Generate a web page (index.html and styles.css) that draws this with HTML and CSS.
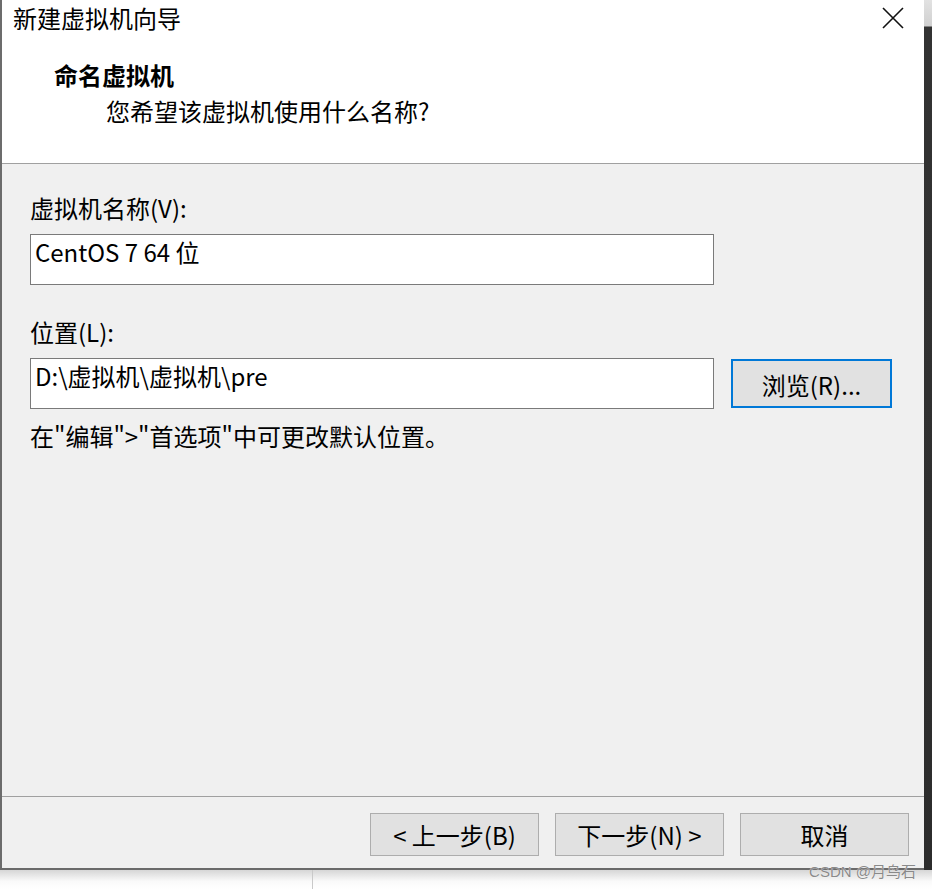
FILE: index.html
```html
<!DOCTYPE html>
<html lang="zh-CN">
<head>
<meta charset="utf-8">
<title>新建虚拟机向导</title>
<link rel="stylesheet" href="styles.css">
</head>
<body>
<div class="screen">
  <div class="top">
    <div class="dialog">
      <div class="header">
        <div class="titlebar">
          <span class="title">新建虚拟机向导</span>
          <span class="close" aria-label="关闭">
            <svg width="22" height="22" viewBox="0 0 22 22"><path d="M1 1 L21 21 M21 1 L1 21" stroke="#111" stroke-width="1.6" fill="none"/></svg>
          </span>
        </div>
        <div class="heading">命名虚拟机</div>
        <div class="subheading">您希望该虚拟机使用什么名称?</div>
      </div>
      <div class="body">
        <div class="label label-first">虚拟机名称(V):</div>
        <div class="field">CentOS 7 64 位</div>
        <div class="label label-second">位置(L):</div>
        <div class="row">
          <div class="field">D:\虚拟机\虚拟机\pre</div>
          <div class="browse">浏览(R)...</div>
        </div>
        <div class="hint">在"编辑"&gt;"首选项"中可更改默认位置。</div>
      </div>
      <div class="footer">
        <div class="btn">&lt; 上一步(B)</div>
        <div class="btn">下一步(N) &gt;</div>
        <div class="btn">取消</div>
      </div>
    </div>
    <div class="side"></div>
  </div>
  <div class="below">
    <div class="below-left"></div>
    <div class="below-right"></div>
  </div>
  <div class="watermark">CSDN @月鸟石</div>
</div>
</body>
</html>
```
FILE: styles.css
```css
html, body {
  margin: 0;
  padding: 0;
  background: #ffffff;
}
body {
  font-family: "Noto Sans CJK SC", "Noto Sans", sans-serif;
  color: #000;
}
.screen {
  position: relative;
  width: 932px;
  height: 889px;
  overflow: hidden;
  display: flex;
  flex-direction: column;
}
.top {
  display: flex;
  height: 870px;
}
.dialog {
  width: 922px;
  height: 868px;
  border-left: 2px solid #6c6c6c;
  border-bottom: 2px solid #6a6a6a;
  display: flex;
  flex-direction: column;
  background: #f0f0f0;
}
.side {
  width: 8px;
  background: linear-gradient(#e2e2e2 0, #d0d0d0 26px, #333333 27px, #2c2c2c 100%);
}
.header {
  height: 163px;
  background: #ffffff;
  border-bottom: 1px solid #a0a0a0;
  box-sizing: content-box;
}
.titlebar {
  display: flex;
  justify-content: space-between;
  align-items: center;
  height: 36px;
  padding: 0 20px 0 11px;
}
.title {
  font-size: 24px;
  line-height: 36px;
}
.close {
  display: flex;
  width: 22px;
  height: 22px;
}
.heading {
  font-size: 24px;
  font-weight: bold;
  line-height: 28px;
  margin: 25px 0 0 52px;
}
.subheading {
  font-size: 24px;
  line-height: 28px;
  margin: 8px 0 0 104px;
}
.body {
  flex: 1;
  padding: 30px 0 0 28px;
  font-size: 24px;
}
.label {
  line-height: 28px;
}
.label-second {
  margin-top: 33px;
}
.field {
  box-sizing: border-box;
  width: 684px;
  height: 51px;
  margin-top: 12px;
  border: 1px solid #7a7a7a;
  background: #ffffff;
  padding: 3px 4px;
  line-height: 28px;
}
.row {
  display: flex;
  align-items: flex-start;
  gap: 17px;
}
.browse {
  box-sizing: border-box;
  width: 161px;
  height: 49px;
  margin-top: 13px;
  border: 2px solid #0078d7;
  background: #e1e1e1;
  display: flex;
  align-items: center;
  justify-content: center;
  padding-top: 2px;
}
.hint {
  margin-top: 13px;
  line-height: 28px;
}
.footer {
  height: 72px;
  border-top: 1px solid #a0a0a0;
  display: flex;
  justify-content: flex-end;
  align-items: flex-start;
  gap: 16px;
  padding: 16px 15px 0 0;
  box-sizing: border-box;
}
.btn {
  box-sizing: border-box;
  width: 169px;
  height: 43px;
  border: 1px solid #adadad;
  background: #e1e1e1;
  font-size: 24px;
  display: flex;
  align-items: center;
  justify-content: center;
}
.below {
  display: flex;
  flex: 1;
}
.below-left {
  width: 312px;
  border-right: 1px solid #c9c9c9;
  background: linear-gradient(#d6d6d6, #fafafa 60%, #ffffff);
}
.below-right {
  flex: 1;
  background: linear-gradient(#d6d6d6, #fafafa 60%, #ffffff);
}
.watermark {
  position: absolute;
  right: 16px;
  bottom: 8px;
  font-size: 15px;
  color: #8a8a8a;
  font-family: "Liberation Sans", "Noto Sans CJK SC", sans-serif;
  text-shadow: 0 0 1px #fff;
}
```
